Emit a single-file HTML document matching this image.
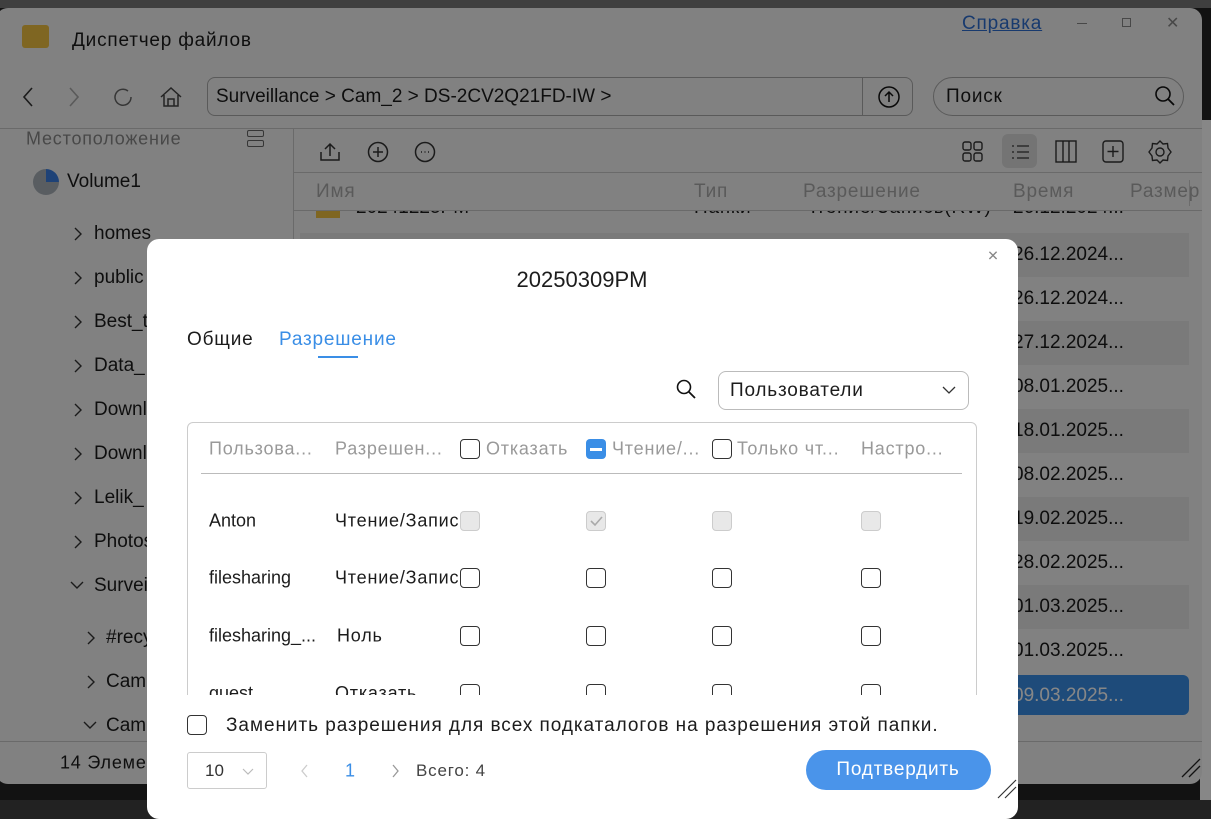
<!DOCTYPE html>
<html><head><meta charset="utf-8"><style>
*{margin:0;padding:0;box-sizing:border-box}
body{width:1211px;height:800px;overflow:hidden;background:#222;font-family:"Liberation Sans","DejaVu Sans",sans-serif;position:relative;color:#1c1c1c}
.a{position:absolute;white-space:nowrap}
.t{position:absolute;white-space:nowrap;transform:translateY(-50%)}
.hl{position:absolute;height:1px;background:#c8c8c8}
.row{position:absolute;left:300px;width:889px;height:44px;background:#e6e6e6}
.cb{position:absolute;width:20px;height:20px;border:1.5px solid #333;border-radius:4px;background:#fff}
.cbd{border-color:#ccc;background:#e8e8e8}
.ru{letter-spacing:.8px}
svg{position:absolute}
.chev{font-size:18px}
</style></head><body>
<div class="a" style="left:0;top:0;width:1211px;height:8px;background:#777"></div>
<div class="a" style="left:1200px;top:120px;width:11px;height:680px;background:#fff"></div>
<div class="a" style="left:-4px;top:8px;width:1206px;height:776px;background:#f4f4f4;border-radius:12px"></div>
<!-- title row -->
<div class="a" style="left:22px;top:25px;width:27px;height:23px;background:#f0c040;border-radius:3px"></div>
<div class="t ru" style="left:72px;top:41px;font-size:19px">Диспетчер файлов</div>
<div class="t ru" style="left:962px;top:24px;font-size:19px;color:#2f6fd0;text-decoration:underline">Справка</div>
<div class="a" style="left:1077px;top:23px;width:10px;height:1px;background:#888"></div>
<div class="a" style="left:1122px;top:18px;width:9px;height:9px;border:1px solid #888"></div>
<div class="t" style="left:1166px;top:23px;font-size:16px;color:#888">✕</div>
<!-- nav row -->
<svg style="left:18px;top:85px" width="20" height="24"><path d="M14 3 L6 12 L14 21" stroke="#333" stroke-width="1.6" fill="none"/></svg>
<svg style="left:64px;top:85px" width="20" height="24"><path d="M6 3 L14 12 L6 21" stroke="#aaa" stroke-width="1.6" fill="none"/></svg>
<svg style="left:111px;top:85px" width="24" height="24"><path d="M17 6 A8 8 0 1 0 20 12" stroke="#666" stroke-width="1.5" fill="none"/></svg>
<svg style="left:158px;top:84px" width="26" height="26"><path d="M3 13 L13 4 L23 13 M6 11 V22 H20 V11 M10 22 V15 H16 V22" stroke="#444" stroke-width="1.5" fill="none"/></svg>
<div class="a" style="left:207px;top:77px;width:706px;height:39px;border:1px solid #aaa;border-radius:8px"></div>
<div class="a" style="left:862px;top:77px;width:1px;height:39px;background:#aaa"></div>
<div class="t" style="left:216px;top:97px;font-size:19px">Surveillance &gt; Cam_2 &gt; DS-2CV2Q21FD-IW &gt;</div>
<svg style="left:876px;top:84px" width="26" height="26"><circle cx="13" cy="13" r="10" stroke="#111" stroke-width="1.5" fill="none"/><path d="M13 18 V8 M9 12 L13 8 L17 12" stroke="#111" stroke-width="1.5" fill="none"/></svg>
<div class="a" style="left:933px;top:77px;width:251px;height:39px;border:1px solid #aaa;border-radius:20px"></div>
<div class="t ru" style="left:946px;top:97px;font-size:19px">Поиск</div>
<svg style="left:1152px;top:84px" width="26" height="26"><circle cx="11" cy="10" r="7" stroke="#111" stroke-width="1.6" fill="none"/><path d="M16 15 L22 21" stroke="#111" stroke-width="1.8"/></svg>
<div class="hl" style="left:0;top:128px;width:1202px"></div>
<!-- sidebar -->
<div class="a" style="left:293px;top:128px;width:1px;height:612px;background:#c8c8c8"></div>
<div class="t ru" style="left:26px;top:139px;font-size:18px;color:#888">Местоположение</div>
<div class="a" style="left:247px;top:130px;width:17px;height:7px;border:1.5px solid #666;border-radius:2px"></div>
<div class="a" style="left:247px;top:140px;width:17px;height:7px;border:1.5px solid #666;border-radius:2px"></div>
<div class="a" style="left:33px;top:169px;width:26px;height:26px;border-radius:50%;background:conic-gradient(#3a7de0 0 25%,#a8b0b8 25% 100%)"></div>
<div class="t" style="left:67px;top:182px;font-size:19px">Volume1</div>
<div style="font-size:19px">
<div class="t" style="left:94px;top:234px">homes</div>
<div class="t" style="left:94px;top:278px">public</div>
<div class="t" style="left:94px;top:322px">Best_t</div>
<div class="t" style="left:94px;top:366px">Data_</div>
<div class="t" style="left:94px;top:410px">Downl</div>
<div class="t" style="left:94px;top:454px">Downl</div>
<div class="t" style="left:94px;top:498px">Lelik_</div>
<div class="t" style="left:94px;top:542px">Photos</div>
<div class="t" style="left:94px;top:586px">Survei</div>
<div class="t" style="left:106px;top:638px">#recy</div>
<div class="t" style="left:106px;top:682px">Cam</div>
<div class="t" style="left:106px;top:726px">Cam</div>
</div>
<svg style="left:70px;top:220px" width="16" height="520"><g stroke="#333" stroke-width="1.4" fill="none">
<path d="M5 8l6 6l-6 6"/><path d="M5 52l6 6l-6 6"/><path d="M5 96l6 6l-6 6"/><path d="M5 140l6 6l-6 6"/><path d="M5 184l6 6l-6 6"/><path d="M5 228l6 6l-6 6"/><path d="M5 272l6 6l-6 6"/><path d="M5 316l6 6l-6 6"/><path d="M1 362l6 6l6 -6"/></g></svg>
<svg style="left:82px;top:620px" width="20" height="120"><g stroke="#333" stroke-width="1.4" fill="none">
<path d="M6 12l6 6l-6 6"/><path d="M6 56l6 6l-6 6"/><path d="M2 102l6 6l6 -6"/></g></svg>
<div class="hl" style="left:0;top:741px;width:1202px"></div>
<div class="t ru" style="left:60px;top:763px;font-size:18px">14 Элеме</div>
<!-- toolbar right -->
<svg style="left:318px;top:140px" width="24" height="24"><path d="M3 12 V20 H21 V12 M12 16 V4 M7 9 L12 4 L17 9" stroke="#333" stroke-width="1.5" fill="none"/></svg>
<svg style="left:366px;top:140px" width="24" height="24"><circle cx="12" cy="12" r="9.5" stroke="#333" stroke-width="1.5" fill="none"/><path d="M12 7 V17 M7 12 H17" stroke="#333" stroke-width="1.5"/></svg>
<svg style="left:413px;top:140px" width="24" height="24"><circle cx="12" cy="12" r="9.5" stroke="#333" stroke-width="1.5" fill="none"/><path d="M8 12h1M11.5 12h1M15 12h1" stroke="#333" stroke-width="1.5"/></svg>
<svg style="left:961px;top:140px" width="24" height="24"><rect x="2" y="2" width="8" height="8" rx="2" stroke="#333" stroke-width="1.4" fill="none"/><rect x="13" y="2" width="8" height="8" rx="2" stroke="#333" stroke-width="1.4" fill="none"/><rect x="2" y="13" width="8" height="8" rx="2" stroke="#333" stroke-width="1.4" fill="none"/><rect x="13" y="13" width="8" height="8" rx="2" stroke="#333" stroke-width="1.4" fill="none"/></svg>
<div class="a" style="left:1002px;top:134px;width:35px;height:34px;background:#dcdcdc;border-radius:6px"></div>
<svg style="left:1008px;top:140px" width="24" height="24"><path d="M4 6h2M9 6h12M4 12h2M9 12h12M4 18h2M9 18h12" stroke="#555" stroke-width="1.4"/></svg>
<svg style="left:1054px;top:139px" width="24" height="26"><rect x="2" y="2" width="20" height="21" stroke="#333" stroke-width="1.4" fill="none"/><path d="M9 2V23M15 2V23" stroke="#333" stroke-width="1.4"/></svg>
<svg style="left:1101px;top:139px" width="24" height="26"><rect x="2" y="2" width="20" height="21" rx="3" stroke="#333" stroke-width="1.4" fill="none"/><path d="M12 7V18M6.5 12.5H17.5" stroke="#333" stroke-width="1.4"/></svg>
<svg style="left:1148px;top:139px" width="24" height="26"><circle cx="12" cy="13" r="4" stroke="#333" stroke-width="1.4" fill="none"/><path d="M12 2 L15 5 L19.5 4.5 L20 9 L23 13 L20 17 L19.5 21.5 L15 21 L12 24 L9 21 L4.5 21.5 L4 17 L1 13 L4 9 L4.5 4.5 L9 5 Z" stroke="#333" stroke-width="1.4" fill="none"/></svg>
<div class="hl" style="left:294px;top:172px;width:908px"></div>
<div style="font-size:19px;color:#aaa">
<div class="t ru" style="left:316px;top:192px">Имя</div>
<div class="t ru" style="left:694px;top:192px">Тип</div>
<div class="t ru" style="left:803px;top:192px">Разрешение</div>
<div class="t ru" style="left:1013px;top:192px">Время</div>
<div class="t ru" style="left:1130px;top:192px">Размер</div>
</div>
<div class="a" style="left:1189px;top:180px;width:1px;height:26px;background:#ccc"></div>
<div class="a" style="left:294px;top:211px;width:906px;height:24px;overflow:hidden">
<div class="a" style="left:22px;top:-3px;width:24px;height:10px;background:#f0c040"></div>
<div style="font-size:19px">
<div class="a" style="left:62px;top:-14px">20241225PM</div>
<div class="a ru" style="left:400px;top:-14px">Папки</div>
<div class="a ru" style="left:509px;top:-14px">Чтение/Запись(RW)</div>
<div class="a" style="left:719px;top:-14px">26.12.2024...</div>
</div></div>
<div class="hl" style="left:294px;top:210px;width:908px"></div>
<div class="row" style="top:233px"></div>
<div class="row" style="top:321px"></div>
<div class="row" style="top:409px"></div>
<div class="row" style="top:497px"></div>
<div class="row" style="top:585px"></div>
<div class="a" style="left:300px;top:675px;width:889px;height:40px;background:#3a8ee6;border-radius:6px"></div>
<div style="font-size:19px;color:#1a1a1a">
<div class="t" style="left:1013px;top:255px">26.12.2024...</div>
<div class="t" style="left:1013px;top:299px">26.12.2024...</div>
<div class="t" style="left:1013px;top:343px">27.12.2024...</div>
<div class="t" style="left:1013px;top:387px">08.01.2025...</div>
<div class="t" style="left:1013px;top:431px">18.01.2025...</div>
<div class="t" style="left:1013px;top:475px">08.02.2025...</div>
<div class="t" style="left:1013px;top:519px">19.02.2025...</div>
<div class="t" style="left:1013px;top:563px">28.02.2025...</div>
<div class="t" style="left:1013px;top:607px">01.03.2025...</div>
<div class="t" style="left:1013px;top:651px">01.03.2025...</div>
<div class="t" style="left:1013px;top:696px;color:#fff">09.03.2025...</div>
</div>
<svg style="left:1180px;top:757px" width="22" height="22"><path d="M2 20L20 2M9 20L20 9" stroke="#222" stroke-width="1.3"/></svg>
<!-- overlay -->
<div class="a" style="left:0;top:0;width:1211px;height:800px;background:rgba(0,0,0,0.47)"></div>
<!-- dialog -->
<div class="a" style="left:147px;top:239px;width:871px;height:580px;background:#fff;border-radius:12px"></div>
<div class="t" style="left:993px;top:256px;font-size:14px;color:#888;transform:translate(-50%,-50%)">✕</div>
<div class="t" style="left:582px;top:280px;font-size:22px;transform:translate(-50%,-50%)">20250309PM</div>
<div class="t ru" style="left:187px;top:340px;font-size:19px">Общие</div>
<div class="t ru" style="left:279px;top:340px;font-size:19px;color:#3a8ee6">Разрешение</div>
<div class="a" style="left:318px;top:356px;width:40px;height:2px;background:#3a8ee6"></div>
<svg style="left:675px;top:378px" width="22" height="22"><circle cx="9" cy="9" r="6.5" stroke="#111" stroke-width="1.6" fill="none"/><path d="M14 14L20 20" stroke="#111" stroke-width="1.8"/></svg>
<div class="a" style="left:718px;top:371px;width:251px;height:39px;border:1px solid #bbb;border-radius:8px"></div>
<div class="t ru" style="left:730px;top:391px;font-size:19px">Пользователи</div>
<svg style="left:941px;top:384px" width="16" height="12"><path d="M2 3L8 9L14 3" stroke="#333" stroke-width="1.3" fill="none"/></svg>
<div class="a" style="left:187px;top:422px;width:790px;height:290px;border:1px solid #ccc;border-radius:6px;clip-path:inset(0 0 17px 0)"></div>
<div style="font-size:18px;color:#999">
<div class="t ru" style="left:209px;top:449px">Пользова...</div>
<div class="t ru" style="left:335px;top:449px">Разрешен...</div>
<div class="t ru" style="left:486px;top:449px">Отказать</div>
<div class="t ru" style="left:612px;top:449px">Чтение/...</div>
<div class="t ru" style="left:737px;top:449px">Только чт...</div>
<div class="t ru" style="left:861px;top:449px">Настро...</div>
</div>
<div class="cb" style="left:460px;top:439px"></div>
<div class="a" style="left:586px;top:439px;width:20px;height:20px;background:#3a8ee6;border-radius:4px"></div>
<div class="a" style="left:590px;top:448px;width:12px;height:3px;background:#fff"></div>
<div class="cb" style="left:712px;top:439px"></div>
<div class="a" style="left:201px;top:473px;width:761px;height:1px;background:#bbb"></div>
<div style="font-size:18px;color:#1c1c1c">
<div class="t" style="left:209px;top:521px">Anton</div>
<div class="t ru" style="left:335px;top:521px;width:123px;overflow:hidden">Чтение/Запись</div>
<div class="t" style="left:209px;top:578px">filesharing</div>
<div class="t ru" style="left:335px;top:578px;width:123px;overflow:hidden">Чтение/Запись</div>
<div class="t" style="left:209px;top:636px">filesharing_...</div>
<div class="t ru" style="left:337px;top:636px">Ноль</div>
</div>
<div class="a" style="left:188px;top:680px;width:788px;height:15px;overflow:hidden">
<div class="a" style="left:21px;top:3px;font-size:18px">guest</div>
<div class="a ru" style="left:147px;top:3px;font-size:18px">Отказать</div>
<div class="cb" style="left:272px;top:4px"></div><div class="cb" style="left:398px;top:4px"></div><div class="cb" style="left:524px;top:4px"></div><div class="cb" style="left:673px;top:4px"></div>
</div>
<div class="cb cbd" style="left:460px;top:511px"></div>
<div class="cb cbd" style="left:586px;top:511px"></div>
<svg style="left:586px;top:511px" width="20" height="20"><path d="M5 10l4 4l7 -8" stroke="#aaa" stroke-width="1.6" fill="none"/></svg>
<div class="cb cbd" style="left:712px;top:511px"></div>
<div class="cb cbd" style="left:861px;top:511px"></div>
<div class="cb" style="left:460px;top:568px"></div><div class="cb" style="left:586px;top:568px"></div><div class="cb" style="left:712px;top:568px"></div><div class="cb" style="left:861px;top:568px"></div>
<div class="cb" style="left:460px;top:626px"></div><div class="cb" style="left:586px;top:626px"></div><div class="cb" style="left:712px;top:626px"></div><div class="cb" style="left:861px;top:626px"></div>
<div class="cb" style="left:187px;top:715px"></div>
<div class="t" style="left:226px;top:726px;font-size:19px;letter-spacing:.95px">Заменить разрешения для всех подкаталогов на разрешения этой папки.</div>
<div class="a" style="left:187px;top:752px;width:80px;height:37px;border:1px solid #ccc;border-radius:3px"></div>
<div class="t" style="left:205px;top:771px;font-size:17px;color:#333">10</div>
<svg style="left:242px;top:766px" width="12" height="10"><path d="M1 3L6 8L11 3" stroke="#bbb" stroke-width="1.2" fill="none"/></svg>
<svg style="left:299px;top:763px" width="12" height="16"><path d="M8 2L3 8L8 14" stroke="#ccc" stroke-width="1.3" fill="none"/></svg>
<div class="t" style="left:345px;top:771px;font-size:18px;color:#3a8ee6">1</div>
<svg style="left:389px;top:763px" width="12" height="16"><path d="M4 2L9 8L4 14" stroke="#999" stroke-width="1.3" fill="none"/></svg>
<div class="t ru" style="left:416px;top:771px;font-size:17px;color:#444">Всего: 4</div>
<div class="a" style="left:806px;top:750px;width:185px;height:40px;background:#4a94ea;border-radius:20px"></div>
<div class="t ru" style="left:898px;top:770px;font-size:19px;color:#fff;transform:translate(-50%,-50%)">Подтвердить</div>
<svg style="left:996px;top:778px" width="22" height="22"><path d="M2 20L20 2M9 20L20 9" stroke="#333" stroke-width="1.2"/></svg>
</body></html>
